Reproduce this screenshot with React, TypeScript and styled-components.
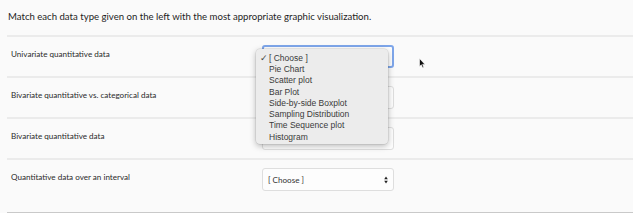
import React from "react";
import styled, {createGlobalStyle} from "styled-components";

const GlobalStyle = createGlobalStyle`
    html, body {
        margin: 0;
        padding: 0;
        background: #fafafa;
    }
    body {
        font-family: Lato, "Open Sans", sans-serif;
        color: #222;
    }
`;

const Page = styled.div`
    width: 633px;
    height: 213px;
    overflow: hidden;
    position: relative;
    background: #fafafa;
`;

const Prompt = styled.p`
    margin: 0;
    padding: 11px 0 0 8px;
    height: 24px;
    font-size: 9.6px;
    line-height: 11px;
    color: #1e1e1e;
`;

const List = styled.div`
    margin-left: 7px;
    border-bottom: 2px solid #c9c9c9;
    padding-bottom: 13px;
`;

const Row = styled.div`
    display: grid;
    grid-template-columns: 255px 132px;
    align-items: center;
    border-top: 2px solid #ebebeb;
    padding: 8px 0;
    height: 23px;
`;

const Label = styled.span`
    padding-left: 4px;
    font-size: 8.1px;
    margin-bottom: 5px;
    color: #2a2a2a;
`;

const SelectWrap = styled.div`
    position: relative;
    height: 23px;
`;

const SelectBox = styled.div<{ $focused?: boolean }>`
    box-sizing: border-box;
    height: 100%;
    display: flex;
    align-items: center;
    justify-content: space-between;
    padding: 0 5px;
    background: #fdfdfd;
    border: ${({$focused}) => ($focused ? "2px solid #7ea6ea" : "1px solid #dedede")};
    border-radius: 3px;
    font-size: 8.1px;
    color: #333;
`;

const Arrows = styled.svg`
    width: 4px;
    height: 8px;
    flex: none;
`;

const Popup = styled.ul`
    position: absolute;
    left: -6px;
    top: 4px;
    width: 132px;
    margin: 0;
    padding: 3px 0 2px;
    list-style: none;
    background: #ececec;
    border-radius: 4px;
    box-shadow: 0 2px 6px rgba(0, 0, 0, 0.28), 0 0 0 0.5px rgba(0, 0, 0, 0.12);
    font-family: "Liberation Sans", Arial, sans-serif;
    font-size: 8.5px;
    color: #3a3a3a;
    z-index: 2;
`;

const Option = styled.li`
    display: flex;
    align-items: center;
    height: 11.3px;
    padding-left: 13px;
    position: relative;
    white-space: nowrap;
`;

const Check = styled.span`
    position: absolute;
    left: 4px;
    font-size: 8.5px;
    color: #444;
`;

const Cursor = styled.svg`
    position: absolute;
    left: 419px;
    top: 58px;
    width: 7px;
    height: 11px;
`;

const rows = [
    "Univariate quantitative data",
    "Bivariate quantitative vs. categorical data",
    "Bivariate quantitative data",
    "Quantitative data over an interval",
];

const options = [
    "[ Choose ]",
    "Pie Chart",
    "Scatter plot",
    "Bar Plot",
    "Side-by-side Boxplot",
    "Sampling Distribution",
    "Time Sequence plot",
    "Histogram",
];

const UpDown = () => (
    <Arrows viewBox="0 0 4 8">
        <path d="M2 0.5 L3.8 3.3 H0.2 Z" fill="#222"/>
        <path d="M2 7.5 L3.8 4.7 H0.2 Z" fill="#222"/>
    </Arrows>
);

const App: React.FC = () => {
    return (
        <Page>
            <GlobalStyle/>
            <Prompt>Match each data type given on the left with the most appropriate graphic visualization.</Prompt>
            <List>
                {rows.map((text, i) => (
                    <Row key={text}>
                        <Label>{text}</Label>
                        <SelectWrap>
                            <SelectBox $focused={i === 0}>
                                <span>[ Choose ]</span>
                                <UpDown/>
                            </SelectBox>
                            {i === 0 && (
                                <Popup>
                                    {options.map((o, j) => (
                                        <Option key={o}>
                                            {j === 0 && <Check>✓</Check>}
                                            {o}
                                        </Option>
                                    ))}
                                </Popup>
                            )}
                        </SelectWrap>
                    </Row>
                ))}
            </List>
            <Cursor viewBox="0 0 7 11">
                <path d="M0.5 0.5 L0.5 8.5 L2.3 6.8 L3.6 9.8 L4.8 9.3 L3.6 6.4 L6 6.4 Z" fill="#111" stroke="#fff" strokeWidth="0.6"/>
            </Cursor>
        </Page>
    );
};

export default App;
